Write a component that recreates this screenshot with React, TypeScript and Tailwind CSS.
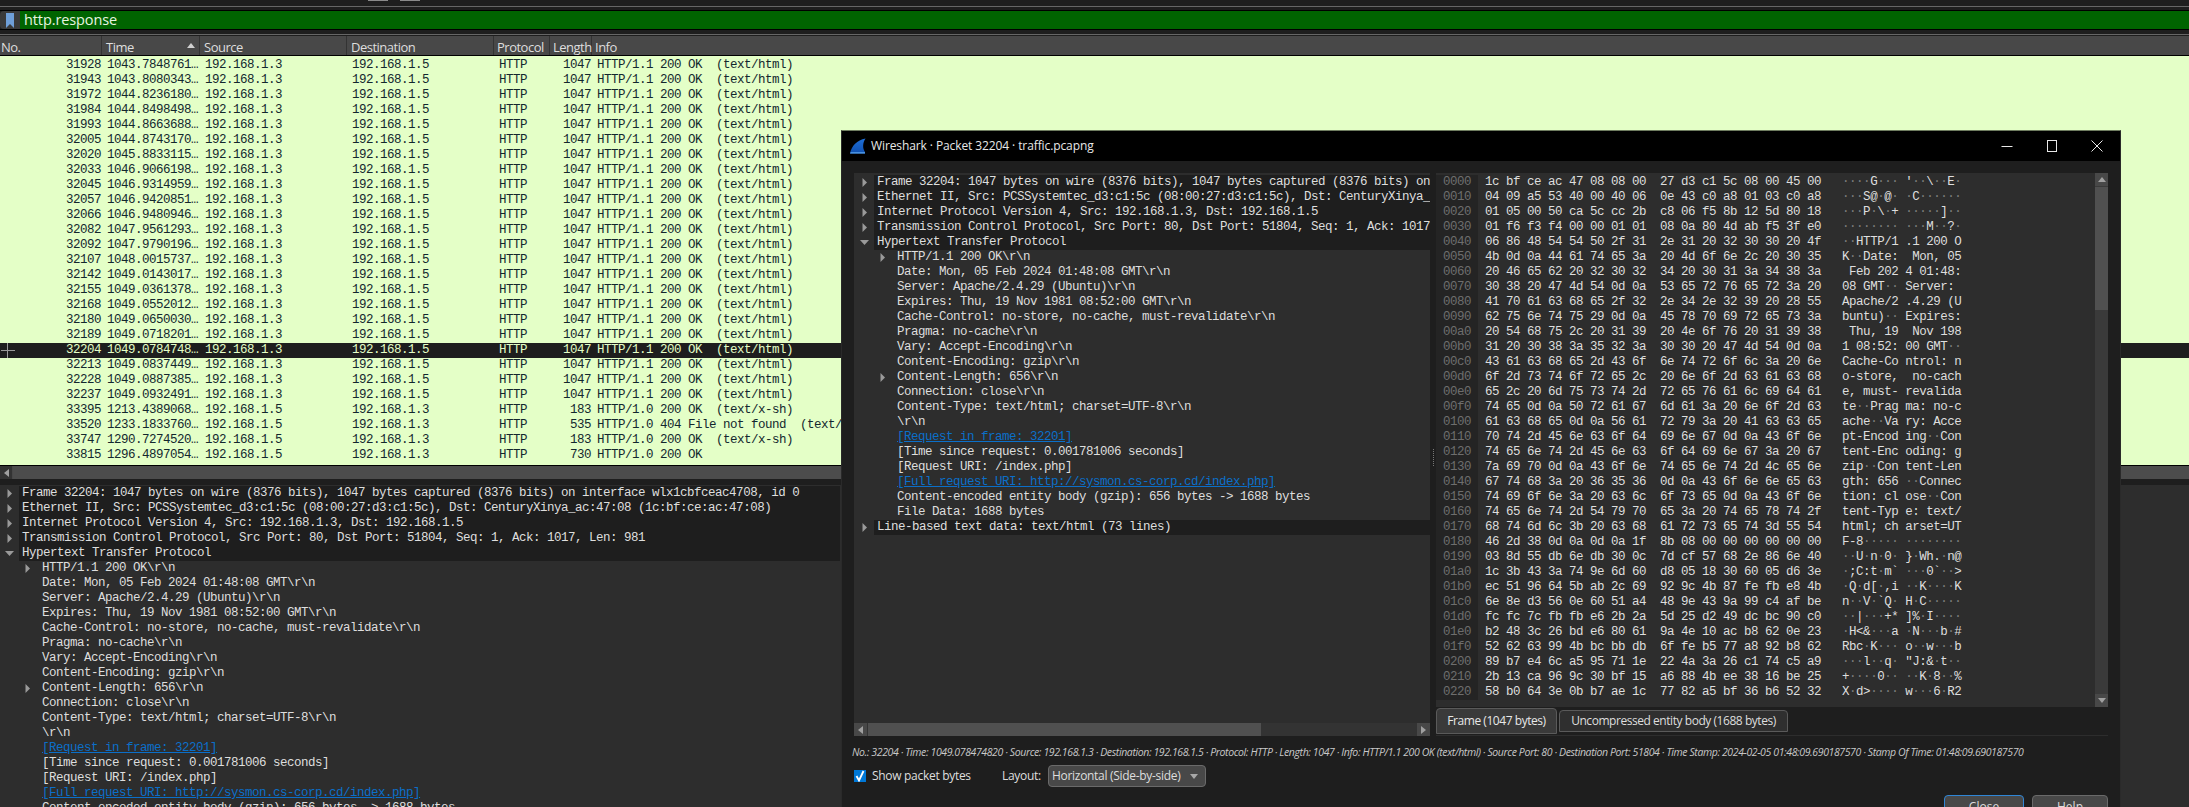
import React from "react";

const packets = [
  ["31928", "1043.7848761…"],
  ["31943", "1043.8080343…"],
  ["31972", "1044.8236180…"],
  ["31984", "1044.8498498…"],
  ["31993", "1044.8663688…"],
  ["32005", "1044.8743170…"],
  ["32020", "1045.8833115…"],
  ["32033", "1046.9066198…"],
  ["32045", "1046.9314959…"],
  ["32057", "1046.9420851…"],
  ["32066", "1046.9480946…"],
  ["32082", "1047.9561293…"],
  ["32092", "1047.9790196…"],
  ["32107", "1048.0015737…"],
  ["32142", "1049.0143017…"],
  ["32155", "1049.0361378…"],
  ["32168", "1049.0552012…"],
  ["32180", "1049.0650030…"],
  ["32189", "1049.0718201…"],
  ["32204", "1049.0784748…"],
  ["32213", "1049.0837449…"],
  ["32228", "1049.0887385…"],
  ["32237", "1049.0932491…"],
  ["33395", "1213.4389068…", "192.168.1.5", "192.168.1.3", "183", "HTTP/1.0 200 OK  (text/x-sh)"],
  ["33520", "1233.1833760…", "192.168.1.5", "192.168.1.3", "535", "HTTP/1.0 404 File not found  (text/html)"],
  ["33747", "1290.7274520…", "192.168.1.5", "192.168.1.3", "183", "HTTP/1.0 200 OK  (text/x-sh)"],
  ["33815", "1296.4897054…", "192.168.1.5", "192.168.1.3", "730", "HTTP/1.0 200 OK"],
];

const columns = [
  { label: "No.", width: "w-[102px] pl-[1px]" },
  { label: "Time", width: "w-[98px] pl-[4px]" },
  { label: "Source", width: "w-[147px] pl-[4px]" },
  { label: "Destination", width: "w-[147px] pl-[4px]" },
  { label: "Protocol", width: "w-[56px] pl-[3px]" },
  { label: "Length", width: "w-[42px] pl-[3px]" },
  { label: "Info", width: "flex-1 pl-[3px]" },
];

type TreeRow = { text: string; level?: number; arrow?: "open" | "closed"; link?: boolean; top?: boolean };

const treeRows: TreeRow[] = [
  { text: "Frame 32204: 1047 bytes on wire (8376 bits), 1047 bytes captured (8376 bits) on interface wlx1cbfceac4708, id 0", arrow: "closed", top: true },
  { text: "Ethernet II, Src: PCSSystemtec_d3:c1:5c (08:00:27:d3:c1:5c), Dst: CenturyXinya_ac:47:08 (1c:bf:ce:ac:47:08)", arrow: "closed", top: true },
  { text: "Internet Protocol Version 4, Src: 192.168.1.3, Dst: 192.168.1.5", arrow: "closed", top: true },
  { text: "Transmission Control Protocol, Src Port: 80, Dst Port: 51804, Seq: 1, Ack: 1017, Len: 981", arrow: "closed", top: true },
  { text: "Hypertext Transfer Protocol", arrow: "open", top: true },
  { text: "HTTP/1.1 200 OK\\r\\n", level: 1, arrow: "closed" },
  { text: "Date: Mon, 05 Feb 2024 01:48:08 GMT\\r\\n", level: 1 },
  { text: "Server: Apache/2.4.29 (Ubuntu)\\r\\n", level: 1 },
  { text: "Expires: Thu, 19 Nov 1981 08:52:00 GMT\\r\\n", level: 1 },
  { text: "Cache-Control: no-store, no-cache, must-revalidate\\r\\n", level: 1 },
  { text: "Pragma: no-cache\\r\\n", level: 1 },
  { text: "Vary: Accept-Encoding\\r\\n", level: 1 },
  { text: "Content-Encoding: gzip\\r\\n", level: 1 },
  { text: "Content-Length: 656\\r\\n", level: 1, arrow: "closed" },
  { text: "Connection: close\\r\\n", level: 1 },
  { text: "Content-Type: text/html; charset=UTF-8\\r\\n", level: 1 },
  { text: "\\r\\n", level: 1 },
  { text: "[Request in frame: 32201]", level: 1, link: true },
  { text: "[Time since request: 0.001781006 seconds]", level: 1 },
  { text: "[Request URI: /index.php]", level: 1 },
  { text: "[Full request URI: http://sysmon.cs-corp.cd/index.php]", level: 1, link: true },
  { text: "Content-encoded entity body (gzip): 656 bytes -> 1688 bytes", level: 1 },
  { text: "File Data: 1688 bytes", level: 1 },
  { text: "Line-based text data: text/html (73 lines)", arrow: "closed", top: true },
];

const hexLines = [
  "1c bf ce ac 47 08 08 00 27 d3 c1 5c 08 00 45 00",
  "04 09 a5 53 40 00 40 06 0e 43 c0 a8 01 03 c0 a8",
  "01 05 00 50 ca 5c cc 2b c8 06 f5 8b 12 5d 80 18",
  "01 f6 f3 f4 00 00 01 01 08 0a 80 4d ab f5 3f e0",
  "06 86 48 54 54 50 2f 31 2e 31 20 32 30 30 20 4f",
  "4b 0d 0a 44 61 74 65 3a 20 4d 6f 6e 2c 20 30 35",
  "20 46 65 62 20 32 30 32 34 20 30 31 3a 34 38 3a",
  "30 38 20 47 4d 54 0d 0a 53 65 72 76 65 72 3a 20",
  "41 70 61 63 68 65 2f 32 2e 34 2e 32 39 20 28 55",
  "62 75 6e 74 75 29 0d 0a 45 78 70 69 72 65 73 3a",
  "20 54 68 75 2c 20 31 39 20 4e 6f 76 20 31 39 38",
  "31 20 30 38 3a 35 32 3a 30 30 20 47 4d 54 0d 0a",
  "43 61 63 68 65 2d 43 6f 6e 74 72 6f 6c 3a 20 6e",
  "6f 2d 73 74 6f 72 65 2c 20 6e 6f 2d 63 61 63 68",
  "65 2c 20 6d 75 73 74 2d 72 65 76 61 6c 69 64 61",
  "74 65 0d 0a 50 72 61 67 6d 61 3a 20 6e 6f 2d 63",
  "61 63 68 65 0d 0a 56 61 72 79 3a 20 41 63 63 65",
  "70 74 2d 45 6e 63 6f 64 69 6e 67 0d 0a 43 6f 6e",
  "74 65 6e 74 2d 45 6e 63 6f 64 69 6e 67 3a 20 67",
  "7a 69 70 0d 0a 43 6f 6e 74 65 6e 74 2d 4c 65 6e",
  "67 74 68 3a 20 36 35 36 0d 0a 43 6f 6e 6e 65 63",
  "74 69 6f 6e 3a 20 63 6c 6f 73 65 0d 0a 43 6f 6e",
  "74 65 6e 74 2d 54 79 70 65 3a 20 74 65 78 74 2f",
  "68 74 6d 6c 3b 20 63 68 61 72 73 65 74 3d 55 54",
  "46 2d 38 0d 0a 0d 0a 1f 8b 08 00 00 00 00 00 00",
  "03 8d 55 db 6e db 30 0c 7d cf 57 68 2e 86 6e 40",
  "1c 3b 43 3a 74 9e 6d 60 d8 05 18 30 60 05 d6 3e",
  "ec 51 96 64 5b ab 2c 69 92 9c 4b 87 fe fb e8 4b",
  "6e 8e d3 56 0e 60 51 a4 48 9e 43 9a 99 c4 af be",
  "fc fc 7c fb fb e6 2b 2a 5d 25 d2 49 dc bc 90 c0",
  "b2 48 3c 26 bd e6 80 61 9a 4e 10 ac b8 62 0e 23",
  "52 62 63 99 4b bc bb db 6f fe b5 77 a8 92 b8 62",
  "89 b7 e4 6c a5 95 71 1e 22 4a 3a 26 c1 74 c5 a9",
  "2b 13 ca 96 9c 30 bf 15 a6 88 4b ee 38 16 be 25",
  "58 b0 64 3e 0b b7 ae 1c 77 82 a5 bf 36 b6 52 32",
];

const statusText =
  "No.: 32204 · Time: 1049.078474820 · Source: 192.168.1.3 · Destination: 192.168.1.5 · Protocol: HTTP · Length: 1047 · Info: HTTP/1.1 200 OK (text/html) · Source Port: 80 · Destination Port: 51804 · Time Stamp: 2024-02-05 01:48:09.690187570 · Stamp Of Time: 01:48:09.690187570";

function Arrow({ open }: { open?: boolean }) {
  return (
    <svg width="9" height="9" viewBox="0 0 9 9" className="shrink-0">
      <polygon points={open ? "0,2 9,2 4.5,7" : "2.5,0 7,4.5 2.5,9"} fill="#9a9a9a" />
    </svg>
  );
}

function PacketRow({ packet }: { packet: string[] }) {
  const [no, time, src = "192.168.1.3", dst = "192.168.1.5", len = "1047", info = "HTTP/1.1 200 OK  (text/html)"] = packet;
  const selected = no === "32204";
  return (
    <div className={`relative flex h-[15px] items-center whitespace-pre leading-[15px] ${selected ? "bg-[#1e1e1e] text-[#e4ffc7]" : "text-[#12272e]"}`}>
      {selected && (
        <svg width="16" height="15" viewBox="0 0 16 15" className="absolute left-0 top-0">
          <path d="M1 7.5H15M7.5 0V15" stroke="#9a9a9a" fill="none" />
        </svg>
      )}
      <div className="w-[102px] pr-px text-right">{no}</div>
      <div className="w-[98px] pl-[5px]">{time}</div>
      <div className="w-[147px] pl-[5px]">{src}</div>
      <div className="w-[147px] pl-[5px]">{dst}</div>
      <div className="w-[56px] pl-[5px]">HTTP</div>
      <div className="w-[42px] pr-px text-right">{len}</div>
      <div className="flex-1 pl-[5px]">{info}</div>
    </div>
  );
}

function TreeLine({ row }: { row: TreeRow }) {
  return (
    <div className="flex h-[15px] items-center whitespace-pre leading-[15px]">
      <div className={`flex h-full shrink-0 items-center ${row.level ? "w-[40px] justify-end pr-[7px]" : "w-[20px] justify-center"}`}>
        {row.arrow && <Arrow open={row.arrow === "open"} />}
      </div>
      <div className={`h-full flex-1 overflow-hidden pl-[3px] ${row.top ? "bg-[#1e1e1e]" : ""} ${row.link ? "text-[#0b6fc9] underline" : "text-[#dedede]"}`}>
        {row.text}
      </div>
    </div>
  );
}

function HexLine({ line, index }: { line: string; index: number }) {
  const bytes = line.split(" ");
  const hex = bytes.slice(0, 8).join(" ") + "  " + bytes.slice(8).join(" ");
  const ascii = bytes.map((b) => {
    const code = parseInt(b, 16);
    if (code >= 32 && code < 127) return String.fromCharCode(code);
    return "·";
  });
  return (
    <div className="flex h-[15px] whitespace-pre leading-[15px]">
      <div className="w-[42px] shrink-0 bg-[#242424] pl-[7px] text-[#6e6e6e]">{(index * 16).toString(16).padStart(4, "0")}</div>
      <div className="pl-[7px] text-[#dedede]">{hex}</div>
      <div className="pl-[21px] text-[#dedede]">
        {ascii.map((c, i) => (
          <React.Fragment key={i}>
            {i === 8 && " "}
            <span className={c === "·" ? "text-[#7c7c7c]" : ""}>{c}</span>
          </React.Fragment>
        ))}
      </div>
    </div>
  );
}

function SharkIcon() {
  return (
    <svg width="16" height="16" viewBox="0 0 16 16" className="shrink-0">
      <defs>
        <linearGradient id="fin" x1="0" y1="0" x2="0" y2="1">
          <stop offset="0" stopColor="#1f6fd6" />
          <stop offset="1" stopColor="#0f4fb0" />
        </linearGradient>
      </defs>
      <path d="M0 15.5C1.5 8 7 2 15.5 0.5C12.5 5 12.5 10.5 15 14C15 14.500 15 15 15 15.500Z" fill="url(#fin)" />
      <path d="M0 15.500H15V14.200H0.600Z" fill="#5aa6f0" />
    </svg>
  );
}

function PacketWindow() {
  return (
    <div className="absolute left-[841px] top-[130px] flex h-[700px] w-[1280px] flex-col border-x border-t border-x-[#2a2a2a] border-t-[#6f7d60] bg-[#1e1e1e] font-['Open_Sans',sans-serif] text-[#dedede]">
      <div className="flex h-[30px] shrink-0 items-center bg-black pl-[8px]">
        <SharkIcon />
        <div className="ml-[5px] text-[12px] tracking-[-0.1px] text-[#e8e8e8]">Wireshark · Packet 32204 · traffic.pcapng</div>
        <div className="ml-auto flex h-full items-center">
          <svg width="12" height="12" viewBox="0 0 12 12" className="mr-[33px]">
            <path d="M0.500 6.500H11.500" stroke="#e8e8e8" fill="none" />
          </svg>
          <svg width="12" height="12" viewBox="0 0 12 12" className="mr-[33px]">
            <rect x="1.500" y="0.500" width="9" height="11" stroke="#e8e8e8" fill="none" />
          </svg>
          <svg width="12" height="12" viewBox="0 0 12 12" className="mr-[17px]">
            <path d="M0.500 0.500L11.500 11.500M11.500 0.500L0.500 11.500" stroke="#e8e8e8" fill="none" />
          </svg>
        </div>
      </div>

      <div className="flex flex-col px-[12px] pt-[12px]">
        <div className="flex h-[563px]">
          <div className="flex w-[576px] shrink-0 flex-col">
            <div className="flex-1 overflow-hidden bg-[#2d2d2d] pt-[2px] font-['Liberation_Mono',monospace] text-[12.5px] tracking-[-0.5px]">
              {treeRows.map((row, i) => (
                <TreeLine key={i} row={row} />
              ))}
            </div>
            <div className="flex h-[13px] items-stretch bg-[#333333]">
              <div className="flex w-[13px] items-center justify-center bg-[#484848]">
                <svg width="5" height="8" viewBox="0 0 5 8"><polygon points="5,0 0,4 5,8" fill="#a0a0a0" /></svg>
              </div>
              <div className="ml-px w-[393px] bg-[#505050]" />
              <div className="ml-auto flex w-[13px] items-center justify-center bg-[#484848]">
                <svg width="5" height="8" viewBox="0 0 5 8"><polygon points="0,0 5,4 0,8" fill="#a0a0a0" /></svg>
              </div>
            </div>
          </div>

          <div className="flex w-[6px] shrink-0 flex-col items-center justify-end pb-[270px]">
            <div className="h-[17px] w-px border-l border-dotted border-[#777777]" />
          </div>

          <div className="flex w-[672px] shrink-0 flex-col">
            <div className="flex h-[534px] bg-[#2d2d2d]">
              <div className="flex-1 overflow-hidden pt-[2px] font-['Liberation_Mono',monospace] text-[12.5px] tracking-[-0.5px]">
                {hexLines.map((line, i) => (
                  <HexLine key={i} line={line} index={i} />
                ))}
              </div>
              <div className="flex w-[13px] shrink-0 flex-col bg-[#3a3a3a]">
                <div className="flex h-[13px] items-center justify-center bg-[#484848]">
                  <svg width="8" height="5" viewBox="0 0 8 5"><polygon points="4,0 8,5 0,5" fill="#a0a0a0" /></svg>
                </div>
                <div className="mt-px h-[123px] bg-[#505050]" />
                <div className="mt-auto flex h-[13px] items-center justify-center bg-[#484848]">
                  <svg width="8" height="5" viewBox="0 0 8 5"><polygon points="0,0 8,0 4,5" fill="#a0a0a0" /></svg>
                </div>
              </div>
            </div>
            <div className="flex h-[29px] items-start border-b border-[#2d2d2d] pt-px text-[12px] tracking-[-0.45px]">
              <div className="flex h-[26px] w-[121px] items-center justify-center rounded-t-sm border border-[#5a5a5a] bg-[#3a3a3a] text-[#e8e8e8]">Frame (1047 bytes)</div>
              <div className="ml-[2px] mt-[2px] flex h-[22px] w-[229px] items-center justify-center rounded-t-sm border border-[#5a5a5a] bg-[#2f2f2f]">Uncompressed entity body (1688 bytes)</div>
            </div>
          </div>
        </div>

        <div className="-ml-[2px] mt-[9px] h-[15px] whitespace-pre text-[10.5px] italic leading-[15px] tracking-[-0.39px] text-[#c8c8c8]">{statusText}</div>

        <div className="mt-[5px] flex h-[22px] items-center text-[12px] tracking-[-0.3px]">
          <div className="flex h-[12px] w-[12px] items-center justify-center bg-[#0078d7]">
            <svg width="10" height="12" viewBox="0 0 10 12"><path d="M1.500 6L4 10.500L8.500 1" stroke="#ffffff" strokeWidth="1.800" fill="none" /></svg>
          </div>
          <div className="ml-[6px] w-[130px]">Show packet bytes</div>
          <div className="w-[46px]">Layout:</div>
          <div className="flex h-[22px] w-[158px] items-center justify-between rounded-sm border border-[#6a6a6a] bg-[#484848] pl-[3px] pr-[7px]">
            <span>Horizontal (Side-by-side)</span>
            <svg width="8" height="5" viewBox="0 0 8 5"><polygon points="0,0 8,0 4,5" fill="#a8a8a8" /></svg>
          </div>
        </div>

        <div className="mt-[8px] flex justify-end gap-[8px] text-[12px]">
          <div className="flex h-[24px] w-[80px] items-center justify-center rounded-sm border border-[#2f86d6] bg-[#484848]">Close</div>
          <div className="flex h-[24px] w-[76px] items-center justify-center rounded-sm border border-[#6a6a6a] bg-[#484848]">Help</div>
        </div>
      </div>
    </div>
  );
}

export default function App() {
  return (
    <div className="relative h-[807px] w-[2189px] overflow-hidden bg-[#1e1e1e] font-['Open_Sans',sans-serif]">
      <div className="flex h-[6px] items-start pl-[368px]">
        <div className="h-px w-[20px] bg-[#8a8a8a]" />
        <div className="ml-[12px] h-px w-[20px] bg-[#8a8a8a]" />
      </div>
      <div className="h-px bg-[#666666]" />

      <div className="mt-[3px] flex h-[20px] border-y border-black">
        <div className="flex w-[20px] items-center justify-center rounded-l-sm bg-[#3a3a3a]">
          <svg width="8" height="15" viewBox="0 0 8 15"><path d="M0 0H8V15L4 11L0 15Z" fill="#6f9fd8" /></svg>
        </div>
        <div className="flex flex-1 items-center bg-[#006400] pl-[4px] text-[14.5px] tracking-[-0.1px] text-[#e8f5e0]">http.response</div>
      </div>

      <div className="mt-[4px] h-px bg-[#666666]" />
      <div className="mt-px flex h-[20px] border-b border-black bg-[#484848] text-[13px] leading-[22px] tracking-[-0.5px] text-[#dedede]">
        {columns.map((col) => (
          <div key={col.label} className={`relative ${col.width} ${col.label === "Info" ? "" : "border-r border-[#333333]"}`}>
            {col.label}
            {col.label === "Time" && (
              <svg width="8" height="5" viewBox="0 0 8 5" className="absolute right-[4px] top-[7px]">
                <polygon points="4,0 8,5 0,5" fill="#d0d0d0" />
              </svg>
            )}
          </div>
        ))}
      </div>

      <div className="h-[409px] overflow-hidden bg-[#e4ffc7] pt-[2px] font-['Liberation_Mono',monospace] text-[12.5px] tracking-[-0.5px]">
        {packets.map((p) => (
          <PacketRow key={p[0]} packet={p} />
        ))}
      </div>

      <div className="flex h-[14px] border-t border-black bg-[#484848]">
        <div className="flex w-[12px] items-center justify-center bg-[#333333]">
          <svg width="5" height="8" viewBox="0 0 5 8"><polygon points="5,0 0,4 5,8" fill="#a0a0a0" /></svg>
        </div>
        <div className="ml-px flex-1 bg-[#4c4c4c]" />
      </div>

      <div className="h-[6px] bg-[#1e1e1e]" />

      <div className="h-[330px] overflow-hidden bg-[#2d2d2d] pt-px font-['Liberation_Mono',monospace] text-[12.5px] tracking-[-0.5px]">
        <div className="-ml-px w-[841px]">
          {treeRows.map((row, i) => (
            <TreeLine key={i} row={row} />
          ))}
        </div>
      </div>

      <PacketWindow />
    </div>
  );
}
